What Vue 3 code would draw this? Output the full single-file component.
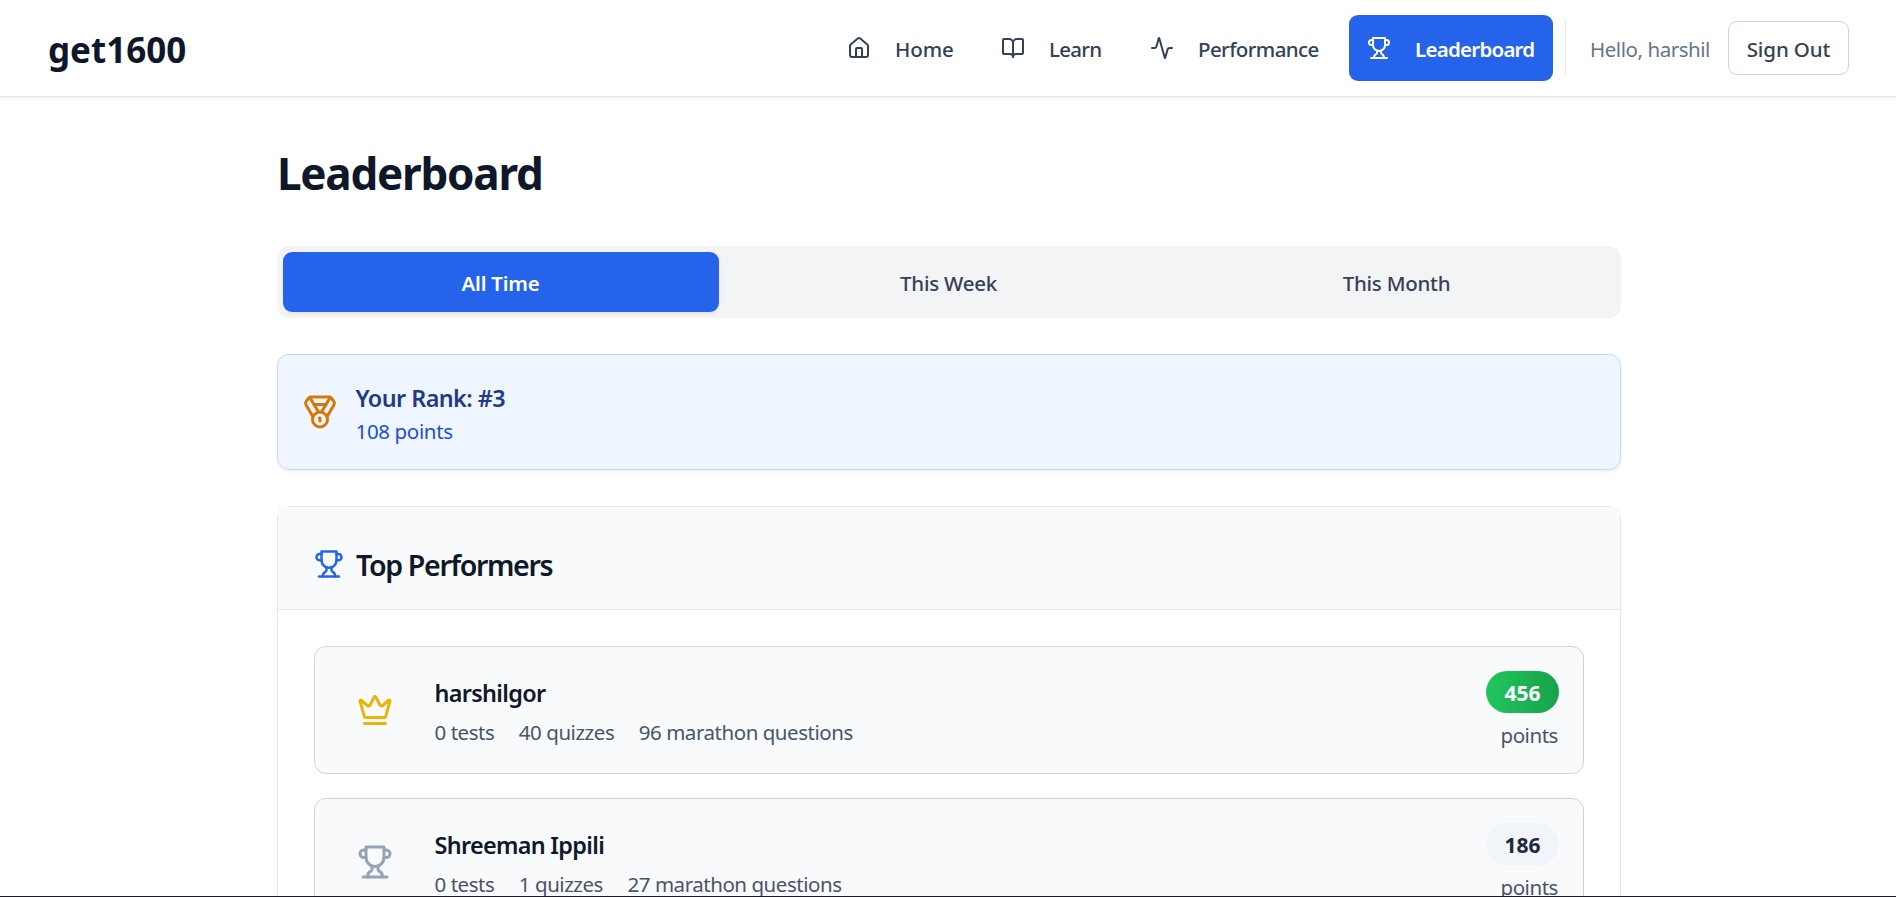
<script setup>
import { h } from 'vue'

const shapes = {
  home: ['M15 21v-8a1 1 0 0 0-1-1h-4a1 1 0 0 0-1 1v8', 'M3 10a2 2 0 0 1 .709-1.528l7-5.999a2 2 0 0 1 2.582 0l7 5.999A2 2 0 0 1 21 10v9a2 2 0 0 1-2 2H5a2 2 0 0 1-2-2z'],
  book: ['M12 7v14', 'M3 18a1 1 0 0 1-1-1V4a1 1 0 0 1 1-1h5a4 4 0 0 1 4 4 4 4 0 0 1 4-4h5a1 1 0 0 1 1 1v13a1 1 0 0 1-1 1h-6a3 3 0 0 0-3 3 3 3 0 0 0-3-3z'],
  activity: ['M22 12h-2.48a2 2 0 0 0-1.93 1.46l-2.35 8.36a.25.25 0 0 1-.48 0L9.24 2.18a.25.25 0 0 0-.48 0l-2.35 8.36A2 2 0 0 1 4.49 12H2'],
  trophy: ['M6 9H4.5a2.5 2.5 0 0 1 0-5H6', 'M18 9h1.5a2.5 2.5 0 0 0 0-5H18', 'M4 22h16', 'M10 14.66V17c0 .55-.47.98-.97 1.21C7.85 18.75 7 20.24 7 22', 'M14 14.66V17c0 .55.47.98.97 1.21C16.15 18.75 17 20.24 17 22', 'M18 2H6v7a6 6 0 0 0 12 0V2Z'],
  medal: ['M7.21 15 2.66 7.14a2 2 0 0 1 .13-2.2L4.4 2.8A2 2 0 0 1 6 2h12a2 2 0 0 1 1.6.8l1.6 2.14a2 2 0 0 1 .14 2.2L16.79 15', 'M11 12 5.12 2.2', 'm13 12 5.88-9.8', 'M8 7h8', 'M7 17a5 5 0 1 0 10 0a5 5 0 1 0-10 0', 'M12 18v-2h-.5'],
  crown: ['M11.562 3.266a.5.5 0 0 1 .876 0L15.39 8.87a1 1 0 0 0 1.516.294L21.183 5.5a.5.5 0 0 1 .798.519l-2.834 10.246a1 1 0 0 1-.956.734H5.81a1 1 0 0 1-.957-.734L2.02 6.02a.5.5 0 0 1 .798-.519l4.276 3.664a1 1 0 0 0 1.516-.294z', 'M5 21h14'],
}

const Icon = (props) =>
  h('svg', { viewBox: '0 0 24 24', fill: 'none', stroke: 'currentColor', 'stroke-width': 2, 'stroke-linecap': 'round', 'stroke-linejoin': 'round' },
    shapes[props.name].map((d) => h('path', { d })))
Icon.props = ['name']

const nav = [
  { id: 'home', icon: 'home', label: 'Home' },
  { id: 'learn', icon: 'book', label: 'Learn' },
  { id: 'performance', icon: 'activity', label: 'Performance' },
  { id: 'leaderboard', icon: 'trophy', label: 'Leaderboard', active: true },
]
const tabs = ['All Time', 'This Week', 'This Month']
const players = [
  { name: 'harshilgor', icon: 'crown', tone: 'gold', stats: ['0 tests', '40 quizzes', '96 marathon questions'], points: 456, first: true },
  { name: 'Shreeman Ippili', icon: 'trophy', tone: 'silver', stats: ['0 tests', '1 quizzes', '27 marathon questions'], points: 186 },
]
</script>

<template>
  <div class="screen">
    <header class="topbar">
      <div class="brand">get1600</div>
      <nav class="nav">
        <a v-for="n in nav" :key="n.id" class="nav-item" :class="{ active: n.active }">
          <Icon :name="n.icon" class="i24" />
          <span class="nav-label" :class="n.id">{{ n.label }}</span>
        </a>
        <div class="user">
          <span class="hello">Hello, harshil</span>
          <button class="signout">Sign Out</button>
        </div>
      </nav>
    </header>

    <main class="main">
      <h1 class="title">Leaderboard</h1>

      <div class="tabs">
        <button v-for="(t, i) in tabs" :key="t" class="tab" :class="{ active: i === 0 }">{{ t }}</button>
      </div>

      <section class="rank">
        <Icon name="medal" class="i36 bronze" />
        <div class="rank-text">
          <div class="rank-title">Your Rank: #3</div>
          <div class="rank-points">108 points</div>
        </div>
      </section>

      <section class="card">
        <div class="card-head">
          <Icon name="trophy" class="i30" />
          <h2 class="card-title">Top Performers</h2>
        </div>
        <div class="rows">
          <div v-for="p in players" :key="p.name" class="player">
            <div class="place"><Icon :name="p.icon" class="i36" :class="p.tone" /></div>
            <div class="info">
              <div class="name">{{ p.name }}</div>
              <div class="stats"><span v-for="s in p.stats" :key="s">{{ s }}</span></div>
            </div>
            <div class="score">
              <div class="badge" :class="{ first: p.first }">{{ p.points }}</div>
              <div class="unit">points</div>
            </div>
          </div>
        </div>
      </section>
    </main>
  </div>
</template>

<style>
body { margin: 0; }
</style>

<style scoped>
.screen {
  box-sizing: border-box;
  height: 897px;
  overflow: hidden;
  background: #fff;
  border-bottom: 1px solid #1b1b2b;
  color: #0f172a;
  font-family: "Noto Sans", "Open Sans", sans-serif;
  font-size: 20.5px;
  line-height: 30px;
  white-space: nowrap;
}
.screen *, .screen *::before { box-sizing: border-box; }
button { font: inherit; margin: 0; }

.topbar {
  height: 97px;
  padding: 0 47px 0 48px;
  display: flex;
  align-items: center;
  justify-content: space-between;
  border-bottom: 1px solid #dbe5f0;
  box-shadow: 0 1.5px 3px rgba(0, 0, 0, 0.06);
}
.brand { font-size: 35px; font-weight: 700; line-height: 48px; padding-top: 3px; }
.nav { display: flex; align-items: center; gap: 12px; }
.nav-item {
  display: flex;
  align-items: center;
  gap: 24px;
  height: 66px;
  padding: 0 18px;
  border-radius: 9px;
  color: #334155;
  font-weight: 500;
}
.nav-item.active { background: #2563eb; color: #fff; font-weight: 600; }
.nav-label { padding-top: 1px; }
.nav-label.home { width: 58px; letter-spacing: -0.1px; }
.nav-label.learn { width: 53px; letter-spacing: -0.7px; }
.nav-label.performance { width: 121px; letter-spacing: -0.6px; }
.nav-label.leaderboard { width: 120px; letter-spacing: -0.75px; }
.i24 { width: 24px; height: 24px; flex: none; }
.i30 { width: 30px; height: 30px; flex: none; color: #2563eb; }
.i36 { width: 36px; height: 36px; flex: none; display: block; }
.bronze { color: #d97706; }
.gold { color: #eab308; }
.silver { color: #94a3b8; }

.user {
  display: flex;
  align-items: center;
  gap: 18px;
  height: 54px;
  padding-left: 24px;
  border-left: 1px solid #e2e8f0;
}
.hello { width: 120px; padding-top: 1px; color: #64748b; letter-spacing: -0.45px; }
.signout {
  width: 121px;
  height: 54px;
  padding: 1px 0 0;
  background: #fff;
  border: 1px solid #cbd5e1;
  border-radius: 9px;
  color: #334155;
  font-weight: 500;
  letter-spacing: -0.1px;
}

.main { width: 1344px; margin: 0 auto; padding-top: 48px; position: relative; left: 1px; }
.title { margin: 0 0 46px; padding-top: 1px; font-size: 44px; font-weight: 700; line-height: 54px; letter-spacing: -1.25px; }

.tabs {
  display: grid;
  grid-template-columns: repeat(3, 1fr);
  gap: 12px;
  height: 72px;
  padding: 6px;
  background: #f3f4f6;
  border-radius: 12px;
}
.tab {
  padding: 1px 1px 0 0;
  border: 0;
  border-radius: 9px;
  background: none;
  color: #334155;
  font-weight: 500;
  letter-spacing: -0.25px;
}
.tab.active { background: #2563eb; color: #fff; font-weight: 600; letter-spacing: -0.25px; box-shadow: 0 1.5px 3px rgba(0, 0, 0, 0.06); }

.rank {
  display: flex;
  align-items: center;
  gap: 18px;
  height: 116px;
  margin-top: 36px;
  padding: 0 24px;
  background: #eff6ff;
  border: 1px solid #bfdbfe;
  border-radius: 12px;
  box-shadow: 0 1.5px 3px rgba(0, 0, 0, 0.05);
}
.rank-text { padding-top: 2px; margin-left: -0.5px; }
.rank-title { font-size: 23.4px; font-weight: 600; line-height: 36px; letter-spacing: -0.57px; color: #1e3a8a; }
.rank-points { color: #1d4ed8; letter-spacing: -0.35px; }

.card {
  height: 600px;
  margin-top: 36px;
  border: 1px solid #e2e8f0;
  border-radius: 12px;
}
.card-head {
  display: flex;
  align-items: center;
  gap: 12px;
  height: 103px;
  padding: 12px 36px 0;
  background: #f8fafc;
  border-bottom: 1px solid #e2e8f0;
}
.card-title { margin: 0; padding-top: 2px; font-size: 28.6px; font-weight: 600; line-height: 36px; letter-spacing: -1.36px; }
.rows { display: flex; flex-direction: column; gap: 24px; padding: 36px; }
.player {
  display: flex;
  align-items: center;
  gap: 24px;
  height: 128px;
  padding: 0 24px;
  background: #f8fafc;
  border: 1px solid #cbd5e1;
  border-radius: 12px;
}
.place { width: 72px; display: flex; justify-content: center; }
.info { flex: 1; margin-left: -0.5px; padding-top: 2px; }
.name { margin-bottom: 6px; font-size: 23.4px; font-weight: 600; line-height: 36px; letter-spacing: -0.68px; }
.stats { display: flex; gap: 24.5px; color: #475569; letter-spacing: -0.46px; }
.score { display: flex; flex-direction: column; align-items: flex-end; }
.badge {
  width: 73px;
  height: 42px;
  border-radius: 21px;
  background: #f1f5f9;
  color: #1e293b;
  font-size: 21px;
  font-weight: 700;
  line-height: 44px;
  text-align: center;
}
.badge.first { background: linear-gradient(to right, #22c55e, #16a34a); color: #fff; }
.unit { height: 36px; padding: 7px 1px 0 0; color: #475569; letter-spacing: -0.45px; }
</style>
